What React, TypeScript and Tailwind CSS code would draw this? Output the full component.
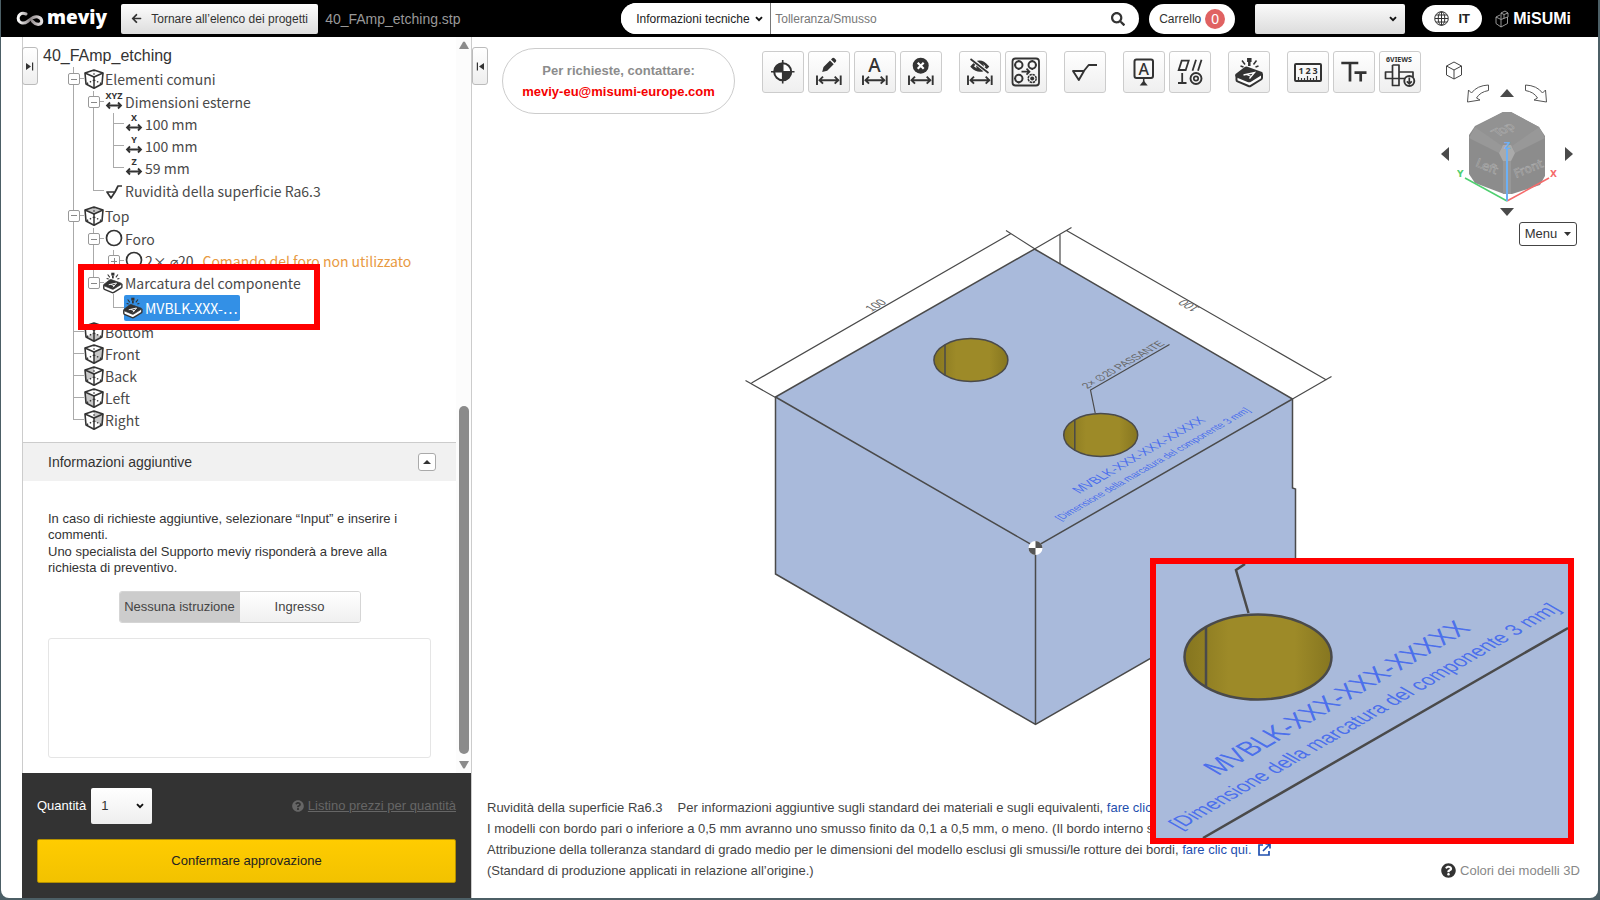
import React from "react";
import clsx from "clsx";
import { FaArrowLeft, FaQuestionCircle, FaSearch } from "react-icons/fa";

const INK = "#333333";

/* --------------------------------- icons ---------------------------------- */
type Face = "none" | "top" | "bottom" | "front" | "back" | "left" | "right";

const FACES: Record<Face, string> = {
  none: "",
  top: "1,4 10,1 19,4 10,8",
  bottom: "2,15 10,11 18,15 10,19",
  front: "10,8 19,4 18,15 10,19",
  left: "1,4 10,8 10,19 2,15",
  back: "1,4 10,1 10,11 2,15",
  right: "10,1 19,4 18,15 10,11",
};

function CubeIcon({ face = "none" }: { face?: Face }) {
  return (
    <svg width="20" height="20" viewBox="0 0 20 20" fill="none" stroke={INK} strokeLinejoin="round">
      <polygon points={FACES[face]} fill="#c8c8c8" stroke="none" />
      <path d="M1 4 10 1l9 3-1 11-8 4.300-8-4.300z" strokeWidth="1.600" />
      <path d="M1 4l9 4 9-4M10 8v11" strokeWidth="1.500" />
      <path d="M10 1v10L2 15M10 11l8 4" strokeWidth="1.300" strokeDasharray="1.500 1.800" />
    </svg>
  );
}

function AxisIcon({ label }: { label: string }) {
  return (
    <svg width="20" height="22" viewBox="0 0 20 22" fill="none" stroke={INK} strokeWidth="1.800" className="overflow-visible">
      <text x="10" y="8" textAnchor="middle" fontSize="9" fontWeight="700" fontFamily="Noto Sans, sans-serif" fill={INK} stroke="none">
        {label}
      </text>
      <path d="M4 14.500h12M6 11.500l-3 3 3 3M14 11.500l3 3-3 3" />
    </svg>
  );
}

function RoughIcon() {
  return (
    <svg width="20" height="20" viewBox="0 0 20 20" fill="none" stroke={INK} strokeWidth="1.700" strokeLinejoin="round">
      <path d="M3 11h8l-4 6zM11 11l3-6h4" />
    </svg>
  );
}

function HoleIcon() {
  return (
    <svg width="20" height="20" viewBox="0 0 20 20" fill="none">
      <circle cx="10" cy="9" r="7.500" stroke={INK} strokeWidth="1.700" />
    </svg>
  );
}

function MarkShape() {
  return (
    <>
      <path d="M21.300 7v4" stroke={INK} strokeWidth="4.500" />
      <path d="M21.300 11v4" stroke={INK} strokeWidth="2.500" />
      <path d="M14 9.500l3 4M28.500 9.500l-3 4M12.500 15l3 1M30.500 15l-3 1" stroke={INK} strokeWidth="1.500" />
      <path d="M8.500 24.500v4.500q0 1 1 1.400l11 4.600q1.200.4 2.200-.2L33 28.500q1-.6 1-1.500v-4" fill="#ffffff" stroke={INK} strokeLinejoin="round" strokeWidth="2" />
      <path d="M8.500 23.500l8.500-6.500q1-.6 2-.3l14 5q1.500.6.300 1.500L22.500 30q-1 .6-2 .2l-11.500-4.700q-1.500-.8-.5-2z" fill={INK} stroke={INK} strokeLinejoin="round" />
      <path d="M15.500 24l11-2.500-5 6M18.500 23.500l5 2" stroke="#ffffff" strokeWidth="1.300" />
    </>
  );
}

function MarkIcon() {
  return (
    <svg width="22" height="22" viewBox="7 6 29 31" fill="none" className="-ml-0.5 shrink-0">
      <MarkShape />
    </svg>
  );
}

/* width arrow that sits under several of the toolbar glyphs */
function Span() {
  return <path d="M9 24.500v9.500M32.700 24.500v9.500M11 29.200h20M15 25.700l-3.500 3.500 3.500 3.500M26.700 25.700l3.500 3.500-3.500 3.500" strokeWidth="1.900" />;
}

function ToolSvg({ children }: { children: React.ReactNode }) {
  return (
    <svg width="42" height="42" viewBox="0 0 42 42" fill="none" stroke={INK} strokeWidth="2" fontFamily="Noto Sans, sans-serif" className="shrink-0">
      {children}
    </svg>
  );
}

const TOOL_GROUPS: { name: string; icon: React.ReactNode }[][] = [
  [
    {
      name: "Origine",
      icon: (
        <>
          <circle cx="20.700" cy="20.700" r="8.500" fill="#ffffff" />
          <path d="M20.700 20.700v-9a9 9 0 0 0-9 9zM20.700 20.700v9a9 9 0 0 0 9-9z" fill={INK} stroke="none" />
          <path d="M20.700 9v23.500M9 20.700h23.500" strokeWidth="1.600" />
        </>
      ),
    },
    {
      name: "Modifica quota",
      icon: (
        <>
          <path d="M14.200 21l1.300-5 6.500-6.500 3.700 3.700-6.500 6.500zM23 8.500l1.500-1.500q1-.7 2 .3l1.200 1.200q1 1 .3 2l-1.400 1.500z" fill={INK} stroke="none" />
          <Span />
        </>
      ),
    },
    {
      name: "Testo quota",
      icon: (
        <>
          <text x="20.500" y="21" textAnchor="middle" fontSize="19" fontWeight="500" fill={INK} stroke="none">A</text>
          <Span />
        </>
      ),
    },
    {
      name: "Elimina quota",
      icon: (
        <>
          <circle cx="20.700" cy="14.700" r="8" fill={INK} stroke="none" />
          <path d="M17.700 11.700l6 6M23.700 11.700l-6 6" stroke="#ffffff" strokeWidth="2.200" />
          <Span />
        </>
      ),
    },
  ],
  [
    {
      name: "Nascondi quote",
      icon: (
        <>
          <path d="M13 15.500q7.500-9.500 15.500 0-7.500 8-15.500 0z" strokeWidth="2.600" />
          <circle cx="21" cy="15" r="2.800" fill={INK} />
          <path d="M12.500 8l17 14" stroke="#f8f8f8" strokeWidth="4" />
          <path d="M11.500 8l18 14" strokeWidth="1.700" />
          <Span />
        </>
      ),
    },
    {
      name: "Gruppo fori",
      icon: (
        <>
          <rect x="7.500" y="7.500" width="26.500" height="27" rx="3" strokeWidth="1.800" />
          <circle cx="13.800" cy="14" r="3.700" />
          <circle cx="27.200" cy="14" r="3.700" />
          <circle cx="13.800" cy="27.500" r="3.700" />
          <circle cx="27.200" cy="27.500" r="4" strokeWidth="1.500" strokeDasharray="2.500 .6" />
          <circle cx="27.200" cy="27.500" r="2" fill={INK} stroke="none" />
          <path d="M13.800 9v2M13.800 17v2M27.200 9v2M27.200 17v2M9 14h2M30 14h2M9 27.500h2M13.800 30.500v2" strokeWidth="1.200" />
          <path d="M16.500 20.700h7.500M21.500 17.700l3 3-3 3" strokeWidth="1.700" />
        </>
      ),
    },
  ],
  [{ name: "Ruvidità", icon: <path d="M9 20h11l-5.200 9zM19 21l5.700-7H33" strokeWidth="1.900" strokeLinejoin="round" /> }],
  [
    {
      name: "Riferimento",
      icon: (
        <>
          <rect x="11.500" y="8.500" width="18.500" height="18.500" rx="2" />
          <text x="20.700" y="23.500" textAnchor="middle" fontSize="16" fontWeight="500" fill={INK} stroke="none">A</text>
          <path d="M20.700 27v4" strokeWidth="1.500" />
          <path d="M20.700 29.500l4 5h-8z" fill={INK} stroke="none" />
        </>
      ),
    },
    {
      name: "Tolleranza geometrica",
      icon: (
        <>
          <path d="M9.700 19l3-9.300h7l-3 9.300zM23.500 19.700l3.500-11M29 19.700l3.500-11M13.200 22v9.700M9 32h8.500" strokeWidth="1.800" />
          <circle cx="27" cy="27.500" r="5.500" strokeWidth="1.900" />
          <circle cx="27" cy="27.500" r="2.200" strokeWidth="1.700" />
        </>
      ),
    },
  ],
  [{ name: "Marcatura", icon: <MarkShape /> }],
  [
    {
      name: "Misura",
      icon: (
        <>
          <rect x="8" y="13" width="26" height="17" rx="1" strokeWidth="2" />
          <text x="14" y="23" textAnchor="middle" fontSize="9" fontWeight="700" fill={INK} stroke="none">1</text>
          <text x="21" y="23" textAnchor="middle" fontSize="9" fontWeight="700" fill={INK} stroke="none">2</text>
          <text x="28" y="23" textAnchor="middle" fontSize="9" fontWeight="700" fill={INK} stroke="none">3</text>
          <path d="M11.500 30v-4M14.500 30v-3M17.500 30v-3M20.500 30v-5M23.500 30v-3M26.500 30v-3M29.500 30v-5" strokeWidth="1.200" />
        </>
      ),
    },
    { name: "Dimensione testo", icon: <path d="M8.300 12h17M17 12v18.500M21.500 21.700h12M27.700 21.700v8.800" strokeWidth="2.700" /> },
    {
      name: "6 viste",
      icon: (
        <>
          <text x="20" y="11" textAnchor="middle" fontSize="7" fontWeight="700" fill={INK} stroke="none">6VIEWS</text>
          <path d="M13.500 14h6.500v7h14v5M20 27.500v7h-6.500v-7H6.500V21h7V14M20 21v6.500h-6.500V21M20 27.500h6" strokeWidth="1.700" strokeLinejoin="round" />
          <circle cx="30.300" cy="30" r="5" fill="#f8f8f8" strokeWidth="1.900" />
          <path d="M30.300 26.500v6M27.800 30.300l2.500 2.500 2.500-2.500" strokeWidth="1.700" />
        </>
      ),
    },
  ],
];

/* drop-down with the small bold chevron */
function Select({ className, children, ...rest }: React.ComponentProps<"select">) {
  return (
    <span className="relative flex">
      <select className={clsx("appearance-none", className)} {...rest}>
        {children}
      </select>
      <svg width="8" height="6" viewBox="0 0 8 6" fill="none" className="pointer-events-none absolute inset-y-0 right-2 my-auto">
        <path d="M1 1.200l3 3 3-3" stroke="#111111" strokeWidth="1.900" />
      </svg>
    </span>
  );
}

/* --------------------------------- header --------------------------------- */
function MeviyLogo() {
  return (
    <a href="#" aria-label="meviy" className="flex items-center gap-[3px] text-white">
      <svg width="28" height="16" viewBox="0 0 28 16" fill="none">
        <defs>
          <linearGradient id="ribbon" x1="0" x2="1">
            <stop offset="0" stopColor="#ffffff" />
            <stop offset=".5" stopColor="#8d8688" />
            <stop offset="1" stopColor="#e4e0e0" />
          </linearGradient>
        </defs>
        <path d="M10 3C5 1 2 4 2.200 7.500 2.500 12 7.500 13.500 11.500 10.500S18 5 22 6c4.500 1.200 5 6.500 1 7.300-3 .5-5-1.300-6.500-3" stroke="url(#ribbon)" strokeWidth="3" strokeLinecap="round" />
      </svg>
      <span className="-mt-1 font-['Open_Sans',sans-serif] text-[19px] leading-6 font-extrabold">meviy</span>
    </a>
  );
}

function Header() {
  return (
    <header className="flex h-[37px] shrink-0 items-center bg-black pr-[27px] pl-[15px] text-xs text-[#333333]">
      <MeviyLogo />
      <button className="ml-[14px] flex h-[30px] w-[197px] items-center justify-center gap-[9px] rounded-xs bg-linear-to-b from-[#fdfdfd] to-[#dddddd]">
        <FaArrowLeft size={11} />
        Tornare all’elenco dei progetti
      </button>
      <h1 className="ml-[7px] text-sm text-[#999999]">40_FAmp_etching.stp</h1>

      <div className="flex-1" />

      <form className="flex h-[31px] w-[518px] items-center rounded-full bg-white">
        <Select aria-label="Categoria" className="h-[31px] w-[150px] rounded-l-full border-r border-[#777777] bg-white pl-[15px] text-[#222222]">
          <option>Informazioni tecniche</option>
        </Select>
        <input aria-label="Cerca" placeholder="Tolleranza/Smusso" className="min-w-0 flex-1 px-1 placeholder:text-[#777777]" />
        <button type="button" aria-label="Cerca" className="mr-[14px]">
          <FaSearch size={14} />
        </button>
      </form>
      <button className="ml-[10px] flex h-[30px] items-center gap-1 rounded-full bg-white px-[10px]">
        Carrello
        <span className="flex size-5 items-center justify-center rounded-full bg-[#e06262] text-sm text-white">0</span>
      </button>
      <div className="ml-5">
        <Select aria-label="Account" className="h-[30px] w-[150px] rounded-xs bg-linear-to-b from-[#fafafa] to-[#dcdcdc]" />
      </div>
      <button className="ml-[17px] flex h-[27px] w-[60px] items-center justify-center gap-[9px] rounded-full bg-white text-[13px] font-bold text-[#222222]">
        <svg width="15" height="15" viewBox="0 0 15 15" fill="none" stroke={INK}>
          <circle cx="7.500" cy="7.500" r="6.800" />
          <ellipse cx="7.500" cy="7.500" rx="3.300" ry="6.800" />
          <path d="M7.500 1v13M1 7.500h13M2 4h11M2 11h11" />
        </svg>
        IT
      </button>
      <a href="#" aria-label="MiSUMi" className="ml-[13px] flex items-center gap-1 text-base leading-none font-bold text-white">
        <svg width="14" height="18" viewBox="0 0 14 18" fill="none" stroke="#bbbbbb" strokeWidth=".8">
          <path d="M1 7l5 2.500v7.500L1 13.500zM6 9.500L12.500 7v6.500L6 17M1 7l4-2M6 3l4-2 3 2v4M6 3v6M6 3l3 1.500v4M9 4.500l4-1.500" />
        </svg>
        MiSUMi
      </a>
    </header>
  );
}

/* ---------------------------------- tree ---------------------------------- */
type Guide = "line" | "tee" | "end" | "empty" | "minus" | "minusEnd" | "plus";

function GuideCell({ kind }: { kind: Guide }) {
  const up = kind !== "empty";
  const down = kind === "line" || kind === "tee" || kind === "minus";
  const stub = kind !== "line" && kind !== "empty";
  const box = kind === "minus" || kind === "minusEnd" || kind === "plus";
  return (
    <span className="relative grid w-5 shrink-0 grid-cols-2 grid-rows-2 self-stretch">
      <span className={clsx("border-[#aaaaaa]", up && "border-r")} />
      <span className={clsx("border-[#aaaaaa]", stub && "border-b")} />
      <span className={clsx("border-[#aaaaaa]", down && "border-r")} />
      <span />
      {box && (
        <button
          aria-label={kind === "plus" ? "Espandi" : "Comprimi"}
          className="absolute inset-0 m-auto flex size-3 items-center justify-center rounded-xs border border-[#999999] bg-white"
        >
          <span className="h-px w-1.5 bg-[#888888]" />
          {kind === "plus" && <span className="absolute h-1.5 w-px bg-[#888888]" />}
        </button>
      )}
    </span>
  );
}

type RowProps = {
  guides: Guide[];
  icon: React.ReactNode;
  label: string;
  note?: string;
  height?: string;
  selected?: boolean;
};

function TreeRow({ guides, icon, label, note, height = "h-[22px]", selected }: RowProps) {
  return (
    <li className={clsx("flex items-center", height)}>
      {guides.map((g, i) => (
        <GuideCell key={i} kind={g} />
      ))}
      <button className={clsx("flex items-center", selected && "h-[26px] rounded-xs bg-[#3390e6] pr-0.5 text-white")}>
        <span className="flex w-[21px] shrink-0 items-center">{icon}</span>
        <span className="leading-5">{label}</span>
        {note && <span className="ml-[9px] leading-5 text-[#e89a42]">{note}</span>}
      </button>
    </li>
  );
}

function FeatureTree() {
  return (
    <div className="px-[41px] pb-[11px]">
      <ul className="font-['Noto_Sans_CJK_JP','Noto_Sans_CJK_SC',sans-serif] text-sm whitespace-nowrap text-[#4a4a4a]">
        <TreeRow height="h-6" guides={["minus"]} icon={<CubeIcon />} label="Elementi comuni" />
        <TreeRow guides={["line", "minus"]} icon={<AxisIcon label="XYZ" />} label="Dimensioni esterne" />
        <TreeRow guides={["line", "line", "tee"]} icon={<AxisIcon label="X" />} label="100 mm" />
        <TreeRow guides={["line", "line", "tee"]} icon={<AxisIcon label="Y" />} label="100 mm" />
        <TreeRow guides={["line", "line", "end"]} icon={<AxisIcon label="Z" />} label="59 mm" />
        <TreeRow height="h-6" guides={["line", "end"]} icon={<RoughIcon />} label="Ruvidità della superficie Ra6.3" />
        <TreeRow height="h-[25px]" guides={["minus"]} icon={<CubeIcon face="top" />} label="Top" />
        <TreeRow guides={["line", "minus"]} icon={<HoleIcon />} label="Foro" />
        <TreeRow guides={["line", "line", "plus"]} icon={<HoleIcon />} label="2× ⌀20" note="Comando del foro non utilizzato" />
        <li className="relative">
          <ul>
            <TreeRow guides={["line", "minusEnd"]} icon={<MarkIcon />} label="Marcatura del componente" />
            <TreeRow height="h-[27px]" guides={["line", "empty", "end"]} icon={<MarkIcon />} label="MVBLK-XXX-…" selected />
          </ul>
          <div className="pointer-events-none absolute -top-2 left-[14px] h-[66px] w-[242px] border-6 border-[#ff0000]" />
        </li>
        <TreeRow guides={["tee"]} icon={<CubeIcon face="bottom" />} label="Bottom" />
        <TreeRow guides={["tee"]} icon={<CubeIcon face="front" />} label="Front" />
        <TreeRow guides={["tee"]} icon={<CubeIcon face="back" />} label="Back" />
        <TreeRow guides={["tee"]} icon={<CubeIcon face="left" />} label="Left" />
        <TreeRow guides={["end"]} icon={<CubeIcon face="right" />} label="Right" />
      </ul>
    </div>
  );
}

/* -------------------------------- side panel ------------------------------ */
function PanelToggle({ flip }: { flip?: boolean }) {
  return (
    <button
      aria-label="Pannello"
      className="flex h-[38px] w-4 shrink-0 items-center justify-center rounded-[3px] border border-[#bbbbbb] bg-linear-to-b from-white to-[#eeeeee]"
    >
      <svg width="8" height="9" viewBox="0 0 8 9" className={flip ? "rotate-180" : undefined}>
        <path d="M0 1l5 3.500L0 8zM6 .5h1.200v8H6z" fill={INK} />
      </svg>
    </button>
  );
}

function SidePanel() {
  return (
    <aside className="ml-[21px] flex w-[450px] shrink-0 flex-col border-x border-[#cccccc]">
      <div className="flex min-h-0 flex-1">
        <div className="min-w-0 flex-1">
          <div className="flex h-[30px] items-start">
            <div className="mt-[10px] -ml-px">
              <PanelToggle />
            </div>
            <h2 className="mt-[9px] ml-[5px] text-base leading-5 text-[#333333]">40_FAmp_etching</h2>
          </div>
          <FeatureTree />
          <section>
            <div className="flex h-[39px] items-center justify-between border-t border-[#cccccc] bg-[#f1f1f1] pr-5 pl-[25px] text-sm text-[#333333]">
              <h3>Informazioni aggiuntive</h3>
              <button aria-label="Comprimi" className="flex size-[18px] items-center justify-center rounded-[3px] border border-[#aaaaaa] bg-white">
                <svg width="8" height="4" viewBox="0 0 8 4">
                  <path d="M0 4l4-4 4 4z" fill={INK} />
                </svg>
              </button>
            </div>
            <div className="pt-[30px] pr-[25px] pl-[25px] text-[13px] leading-4 text-[#333333]">
              <p>
                In caso di richieste aggiuntive, selezionare “Input” e inserire i commenti.
              </p>
              <p className="mt-px">
                Uno specialista del Supporto meviy risponderà a breve alla richiesta di preventivo.
              </p>
              <div className="mx-auto mt-[15px] flex h-8 w-[242px] overflow-hidden rounded-[3px] border border-[#d5d5d5] text-[#444444]">
                <button className="flex-1 bg-[#cccccc] whitespace-nowrap">Nessuna istruzione</button>
                <button className="flex-1 bg-linear-to-b from-white to-[#f0f0f0]">Ingresso</button>
              </div>
              <textarea aria-label="Commenti" className="mt-[15px] block h-[120px] w-full resize-none rounded-[3px] border border-[#e5e5e5]" />
            </div>
          </section>
        </div>
        <div className="flex w-[15px] shrink-0 flex-col items-center bg-[#fcfcfc] pt-1 pb-1">
          <svg width="10" height="8" viewBox="0 0 10 8">
            <path d="M0 8l4-7q1-1 2 0l4 7z" fill="#8b8b8b" />
          </svg>
          <div className="flex-1" />
          <div className="h-[348px] w-[10px] rounded-full bg-[#8b8b8b]" />
          <svg width="10" height="8" viewBox="0 0 10 8" className="mt-[7px]">
            <path d="M0 0l4 7q1 1 2 0l4-7z" fill="#8b8b8b" />
          </svg>
        </div>
      </div>

      <div className="-ml-px bg-[#333333] px-[15px] pt-[15px] pb-[15px] text-[13px]">
        <div className="flex h-9 items-center">
          <label htmlFor="qty" className="mr-[5px] text-white">Quantità</label>
          <Select id="qty" className="h-9 w-[61px] rounded-xs bg-linear-to-b from-white to-[#eeeeee] pl-[10px] text-[#333333]">
            <option>1</option>
          </Select>
          <a href="#" className="ml-auto flex items-center gap-1 text-[#666666]">
            <FaQuestionCircle size={12} />
            <span className="underline">Listino prezzi per quantità</span>
          </a>
        </div>
        <button className="mt-[15px] h-11 w-full rounded-xs border border-[#b38f00] bg-linear-to-b from-[#ffcc00] to-[#f2c200] text-[#222222]">
          Confermare approvazione
        </button>
      </div>
    </aside>
  );
}

/* --------------------------------- viewport ------------------------------- */

/* marking text on the top face; the close-up shows it at twice the size */
function Marking() {
  return (
    <g stroke="none" fill="#3f66ee" fillOpacity=".9">
      <text transform="translate(62 212) rotate(-30) skewX(30)" fontSize="25">MVBLK-XXX-XXX-XXXXX</text>
      <text transform="translate(24 266) rotate(-30) skewX(30)" fontSize="19">[Dimensione della marcatura del componente 3 mm]</text>
    </g>
  );
}

function Model() {
  return (
    <svg viewBox="472 37 1125 861" className="absolute inset-0 h-full w-full" fill="none" stroke="#4a4a4a" strokeWidth="1.500" fontFamily="Liberation Sans, Arial, sans-serif">
      <defs>
        <linearGradient id="bore" x1="0" x2="1">
          <stop offset="0" stopColor="#85751f" />
          <stop offset=".3" stopColor="#9d8a28" />
          <stop offset=".75" stopColor="#9d8a28" />
          <stop offset="1" stopColor="#867620" />
        </linearGradient>
      </defs>
      <path d="M1034 249L1292 399v89l3 1v86L1035 724.500 775 574V397z" fill="#a9badb" />
      <path d="M775 397l260 150 257-148M1035 547v177" />
      <g strokeWidth="1.200">
        <path d="M751 383L1010.500 233.500M745 380.500l30 17M1005.500 230.500l29 18.500" />
        <path d="M1066 230.500L1326 380M1071 227.500L1034 249M1331 376.500L1292 399M1059.500 234v30" />
        <path d="M1094.700 413L1090 390l79-45.500" />
      </g>
      <g fill="url(#bore)">
        <ellipse cx="970.400" cy="360" rx="37" ry="21.500" />
        <ellipse cx="1100.200" cy="435" rx="37" ry="21.500" />
      </g>
      <path d="M944.500 345v30M1074.300 420v30" />
      <g stroke="none" fill="#666666" fontSize="11">
        <text transform="translate(871 312) rotate(-30) skewX(30)">100</text>
        <text transform="translate(1200 308) rotate(210) skewX(-30)">100</text>
        <text transform="translate(1087 389) rotate(-30) skewX(30)" fontSize="10">2× ∅20 PASSANTE</text>
      </g>
      <g transform="translate(1048 388) scale(.5)">
        <Marking />
      </g>
      <circle cx="1035" cy="548" r="7" fill="#ffffff" stroke="none" />
      <path d="M1035 548v-7a7 7 0 0 1 7 7zM1035 548v7a7 7 0 0 1-7-7z" fill="#555555" stroke="none" />
    </svg>
  );
}

function Closeup() {
  return (
    <div className="absolute right-6 bottom-[54px] h-[286px] w-[424px] border-6 border-[#ff0000] bg-[#a9badb]">
      <svg viewBox="0 0 412 274" className="h-full w-full" fill="none" stroke="#4a4a4a" strokeWidth="2.500" fontFamily="Liberation Sans, Arial, sans-serif">
        <path d="M92.500 49L80 6l9-6" />
        <ellipse cx="102" cy="93" rx="73.500" ry="42.500" fill="url(#bore)" />
        <path d="M50 63v60M47 274L412 64" />
        <Marking />
      </svg>
    </div>
  );
}

function Triangle({ label, turn }: { label: string; turn?: string }) {
  return (
    <button aria-label={label}>
      <svg width="14" height="14" viewBox="0 0 14 14" className={turn}>
        <path d="M0 11l7-8 7 8z" fill="#4a4a4a" />
      </svg>
    </button>
  );
}

function TurnArrow({ flip }: { flip?: boolean }) {
  return (
    <button aria-label={flip ? "Ruota a destra" : "Ruota a sinistra"}>
      <svg width="22" height="19" viewBox="0 0 22 19" fill="none" stroke="#555555" className={flip ? "-scale-x-100" : undefined}>
        <path d="M21.500 1v5.500Q13 8 9.500 14l3.500 2-12.500 2L1.500 6l3 3Q10 1.500 21.500 1z" />
      </svg>
    </button>
  );
}

function ViewCube() {
  return (
    <div className="flex w-[140px] flex-col">
      <button aria-label="Vista isometrica" className="ml-[9px] w-4">
        <svg width="16" height="19" viewBox="0 0 16 19" fill="none" stroke="#444444" strokeLinejoin="round">
          <path d="M8 1l7.500 4v9L8 18 .5 14V5zM.5 5L8 9l7.500-4M8 9v9" />
        </svg>
      </button>
      <div className="mt-[3px] flex h-5 items-center justify-center gap-[11px]">
        <TurnArrow />
        <Triangle label="Su" />
        <TurnArrow flip />
      </div>
      <div className="flex items-center justify-center gap-[5px]">
        <Triangle label="Sinistra" turn="-rotate-90" />
        <svg width="100" height="102" viewBox="0 0 100 102" fontFamily="DejaVu Sans, sans-serif" fontSize="12">
          <path d="M46 9h8l28 15 6 9v40l-5 9-28 9h-8L18 80l-6-9V32l6-9z" fill="#8c8c8c" />
          <path d="M46 9h8l28 15-27 20h-10L18 24z" fill="#929292" />
          <path d="M12 35l6-11 27 19-3 7zM88 35l-6-11-27 19 3 7z" fill="#989898" />
          <path d="M46 54h8v37h-8z" fill="#979797" />
          <path d="M46 42h8l4 8-4 8h-8l-4-8z" fill="#aaaaaa" />
          <g fill="#808080" stroke="#aeaeae" strokeWidth=".6">
            <text transform="translate(41 34) rotate(-28) skewX(25)">Top</text>
            <text transform="translate(18 63) rotate(22)">Left</text>
            <text transform="translate(59 75) rotate(-22)">Front</text>
          </g>
          <g fill="none" strokeWidth="1.500">
            <path d="M50 98L8 75" stroke="#4fcf70" />
            <path d="M50 98l42-23" stroke="#f56b6b" />
            <path d="M50 98V46" stroke="#6db0f5" strokeWidth="2" />
          </g>
          <g fontSize="9" fontWeight="700">
            <text x="0" y="74" fill="#4fcf70">Y</text>
            <text x="93" y="74" fill="#f56b6b">X</text>
            <text x="47" y="46" fill="#6db0f5">Z</text>
          </g>
        </svg>
        <Triangle label="Destra" turn="rotate-90" />
      </div>
      <div className="flex justify-center">
        <Triangle label="Giù" turn="rotate-180" />
      </div>
      <button className="mt-[3px] flex h-6 w-[58px] items-center justify-center gap-[7px] self-end rounded-[3px] border border-[#444444] bg-white text-[13px] text-[#333333]">
        Menu
        <svg width="7" height="4" viewBox="0 0 7 4">
          <path d="M0 0h7L3.500 4z" fill={INK} />
        </svg>
      </button>
    </div>
  );
}

function Notes() {
  return (
    <div className="absolute right-[18px] bottom-[17px] left-[15px] flex items-end justify-between text-[13px] leading-[21px] text-[#444444]">
      <div className="whitespace-nowrap">
        <p>
          Ruvidità della superficie Ra6.3<span className="ml-[15px]">Per informazioni aggiuntive sugli standard dei materiali e sugli equivalenti, </span>
          <a href="#" className="text-[#1f4fae]">fare clic qui.</a>
        </p>
        <p>I modelli con bordo pari o inferiore a 0,5 mm avranno uno smusso finito da 0,1 a 0,5 mm, o meno. (Il bordo interno sarà</p>
        <p>
          Attribuzione della tolleranza standard di grado medio per le dimensioni del modello esclusi gli smussi/le rotture dei bordi,{" "}
          <a href="#" className="text-[#1f4fae]">
            fare clic qui.
            <svg width="13" height="13" viewBox="0 0 13 13" fill="none" stroke="#1f4fae" strokeWidth="1.700" className="ml-[6px] inline align-[-2px]">
              <path d="M5 2H1v10h10V8M7.500 1H12v4.500M12 1L5 8" />
            </svg>
          </a>
        </p>
        <p>(Standard di produzione applicati in relazione all’origine.)</p>
      </div>
      <button className="flex shrink-0 items-center gap-1 text-[#888888]">
        <FaQuestionCircle size={15} color={INK} />
        Colori dei modelli 3D
      </button>
    </div>
  );
}

function Viewport() {
  return (
    <main className="relative min-w-0 flex-1">
      <Model />
      <div className="relative flex items-start">
        <div className="mt-[10px]">
          <PanelToggle flip />
        </div>
        <div className="mt-[11px] ml-[14px] flex h-[66px] w-[233px] shrink-0 flex-col items-center justify-center rounded-full border border-[#cccccc] bg-white text-[13px] leading-[21px] font-bold">
          <p className="text-[#8c8c8c]">Per richieste, contattare:</p>
          <a href="#" className="text-[#f50000]">meviy-eu@misumi-europe.com</a>
        </div>
        <div className="mt-[14px] ml-[27px] flex gap-[17px]">
          {TOOL_GROUPS.map((group, i) => (
            <div key={i} className="flex gap-1">
              {group.map(t => (
                <button
                  key={t.name}
                  aria-label={t.name}
                  className="flex size-[42px] items-center justify-center rounded-[3px] border border-[#cccccc] bg-linear-to-b from-white to-[#efefef]"
                >
                  <ToolSvg>{t.icon}</ToolSvg>
                </button>
              ))}
            </div>
          ))}
        </div>
        <div className="mt-6 mr-[21px] ml-auto">
          <ViewCube />
        </div>
      </div>
      <Notes />
      <Closeup />
    </main>
  );
}

export default function App() {
  return (
    <div className="h-screen min-h-[720px] overflow-hidden bg-[#4c5f66] pr-[2px] pb-[2px] pl-px font-['Liberation_Sans',Arial,sans-serif]">
      <div className="flex h-full flex-col overflow-hidden rounded-b-lg bg-white">
        <Header />
        <div className="flex min-h-0 flex-1">
          <SidePanel />
          <Viewport />
        </div>
      </div>
    </div>
  );
}
